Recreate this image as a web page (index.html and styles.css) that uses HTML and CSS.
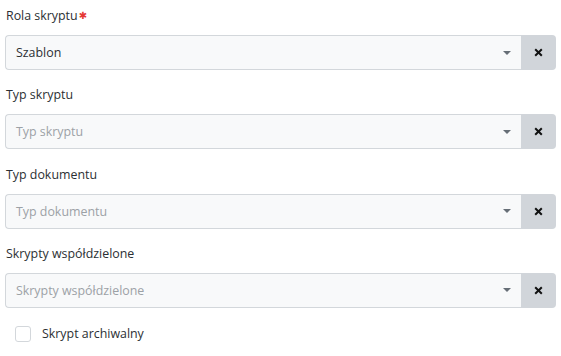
FILE: index.html
```html
<!DOCTYPE html>
<html lang="pl">
<head>
<meta charset="UTF-8" />
<title>Skrypt</title>
<link rel="stylesheet" href="styles.css">
</head>
<body>
  <form class="script-form">
    <div class="field">
      <label class="field-label">Rola skryptu<span class="required">&#x2731;</span></label>
      <div class="select-group">
        <div class="select">
          <span class="select-value">Szablon</span>
          <span class="caret"></span>
        </div>
        <button type="button" class="clear-btn" aria-label="Wyczyść">
          <svg width="9" height="9" viewBox="0 0 9 9"><path d="M1.2 1.2L7.8 7.8M7.8 1.2L1.2 7.8" stroke="#111" stroke-width="2"/></svg>
        </button>
      </div>
    </div>

    <div class="field">
      <label class="field-label">Typ skryptu</label>
      <div class="select-group">
        <div class="select">
          <span class="select-value placeholder">Typ skryptu</span>
          <span class="caret"></span>
        </div>
        <button type="button" class="clear-btn" aria-label="Wyczyść">
          <svg width="9" height="9" viewBox="0 0 9 9"><path d="M1.2 1.2L7.8 7.8M7.8 1.2L1.2 7.8" stroke="#111" stroke-width="2"/></svg>
        </button>
      </div>
    </div>

    <div class="field">
      <label class="field-label">Typ dokumentu</label>
      <div class="select-group">
        <div class="select">
          <span class="select-value placeholder">Typ dokumentu</span>
          <span class="caret"></span>
        </div>
        <button type="button" class="clear-btn" aria-label="Wyczyść">
          <svg width="9" height="9" viewBox="0 0 9 9"><path d="M1.2 1.2L7.8 7.8M7.8 1.2L1.2 7.8" stroke="#111" stroke-width="2"/></svg>
        </button>
      </div>
    </div>

    <div class="field">
      <label class="field-label">Skrypty współdzielone</label>
      <div class="select-group">
        <div class="select">
          <span class="select-value placeholder">Skrypty współdzielone</span>
          <span class="caret"></span>
        </div>
        <button type="button" class="clear-btn" aria-label="Wyczyść">
          <svg width="9" height="9" viewBox="0 0 9 9"><path d="M1.2 1.2L7.8 7.8M7.8 1.2L1.2 7.8" stroke="#111" stroke-width="2"/></svg>
        </button>
      </div>
    </div>

    <label class="check">
      <span class="check-box"></span>
      <span class="check-label">Skrypt archiwalny</span>
    </label>
  </form>
</body>
</html>
```

FILE: styles.css
```css
* {
  box-sizing: border-box;
}
body {
  margin: 0;
  background: #fff;
  color: #2b2f33;
  font-family: 'Open Sans', 'Noto Sans', sans-serif;
  font-size: 12.4px;
}
.script-form {
  padding: 6px 5px 0 5px;
  width: 561px;
}
.field {
  margin-bottom: 15.3px;
}
.field-label {
  display: block;
  line-height: 20px;
  margin: 0 0 9px 1px;
}
.required {
  color: #e53935;
  font-family: 'DejaVu Sans', sans-serif;
  font-size: 10px;
  margin-left: 1px;
  vertical-align: 1px;
}
.select-group {
  display: flex;
  height: 35px;
}
.select {
  flex: 1;
  display: flex;
  align-items: center;
  background: #f8f9fa;
  border: 1px solid #d3d7db;
  border-right: none;
  border-radius: 4px 0 0 4px;
  padding: 0 10px 0 10px;
}
.select-value {
  flex: 1;
}
.placeholder {
  color: #9ca1a6;
}
.caret {
  width: 0;
  height: 0;
  border-left: 4px solid transparent;
  border-right: 4px solid transparent;
  border-top: 4px solid #666e76;
}
.clear-btn {
  width: 35px;
  border: none;
  background: #d1d5da;
  border-radius: 0 4px 4px 0;
  padding: 0;
  display: flex;
  align-items: center;
  justify-content: center;
}
.check {
  display: flex;
  align-items: center;
  height: 16px;
  margin: 18px 0 0 10px;
}
.check-box {
  width: 16px;
  height: 16px;
  border: 1px solid #d3d7db;
  border-radius: 3px;
  background: #fff;
  margin-right: 11px;
}
```
